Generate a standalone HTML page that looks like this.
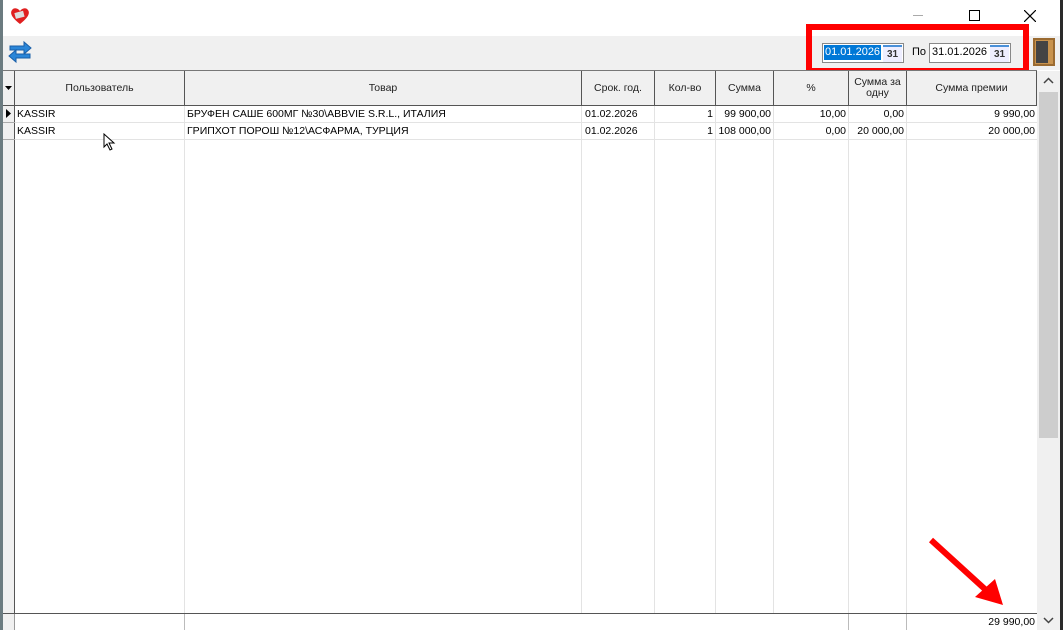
<!DOCTYPE html>
<html><head><meta charset="utf-8"><style>
*{margin:0;padding:0;box-sizing:border-box}
body{width:1063px;height:630px;overflow:hidden;background:#fff;font-family:"Liberation Sans",sans-serif;font-size:11px;color:#000;position:relative}
.a{position:absolute}
.vl{position:absolute;width:1px;background:#e3e3e3}
.hd{position:absolute;top:71px;height:34px;background:#f0f0f0;border-right:1px solid #555;display:flex;align-items:center;justify-content:center;text-align:center;line-height:11px;font-size:10.5px;color:#222}
.c{position:absolute;height:16px;line-height:16px;font-size:10.5px;white-space:nowrap;overflow:hidden}
.r{text-align:right;padding-right:2px}
.hl{position:absolute;left:15px;width:1022px;height:1px;background:#e3e3e3}
</style></head><body>
<div class="a" style="left:0;top:0;width:3px;height:630px;background:#6b7b80"></div>
<div class="a" style="left:1060px;top:0;width:3px;height:630px;background:#2a2a2a"></div>
<svg class="a" style="left:9px;top:6px" width="22" height="20" viewBox="0 0 22 20"><path d="M11 18 C2 11 1 7 3 4 C5 1 9 2 11 5 C13 2 17 1 19 4 C21 7 20 11 11 18Z" fill="#e02020"/><rect x="6" y="6" width="9" height="6" fill="#ddd" transform="rotate(-15 10 9)"/></svg>
<div class="a" style="left:913px;top:15px;width:10px;height:1px;background:#aaa"></div>
<div class="a" style="left:969px;top:10px;width:11px;height:11px;border:1px solid #000"></div>
<svg class="a" style="left:1024px;top:10px" width="12" height="12"><path d="M0 0L12 12M12 0L0 12" stroke="#000" stroke-width="1.2"/></svg>
<div class="a" style="left:3px;top:36px;width:1057px;height:34px;background:#f0f0f0"></div>
<div class="a" style="left:806px;top:36px;width:254px;height:34px;background:#f0f0f0;border-left:1px solid #ddd"></div>
<svg class="a" style="left:6px;top:38px" width="28" height="28" viewBox="0 0 28 28"><path d="M4 12 V8 H18 V4 L25 10 L18 16 V12 Z" fill="#2b86d8" stroke="#1a5fa8"/><path d="M24 16 V20 H10 V24 L3 18 L10 12 V16 Z" fill="#2b86d8" stroke="#1a5fa8"/></svg>
<div class="a" style="left:822px;top:43px;width:82px;height:20px;background:#fff;border:1px solid #888"></div>
<div class="a" style="left:824px;top:45px;background:#0078d7;color:#fff;height:15px;line-height:15px;font-size:11px;padding:0 1px">01.01.2026</div>
<div class="a" style="left:883px;top:45px;width:19px;height:17px;background:#eef;border-top:2px solid #4a90d9;font-size:10px;font-weight:bold;text-align:center;line-height:16px;color:#333">31</div>
<div class="a" style="left:912px;top:46px;font-size:11px">По</div>
<div class="a" style="left:929px;top:43px;width:82px;height:20px;background:#fff;border:1px solid #888"></div>
<div class="a" style="left:932px;top:45px;height:15px;line-height:15px;font-size:11px">31.01.2026</div>
<div class="a" style="left:990px;top:45px;width:19px;height:17px;background:#eef;border-top:2px solid #4a90d9;font-size:10px;font-weight:bold;text-align:center;line-height:16px;color:#333">31</div>
<div class="a" style="left:806px;top:24px;width:223px;height:50px;border:6px solid #f00"></div>
<div class="a" style="left:1033px;top:38px;width:22px;height:28px;background:#c8934e;border:2px solid #9a6a30"></div>
<div class="a" style="left:1036px;top:41px;width:12px;height:22px;background:#444"></div>
<div class="a" style="left:3px;top:70px;width:1034px;height:1px;background:#777"></div>
<div class="a" style="left:3px;top:71px;width:12px;height:542px;background:#f0f0f0;border-right:1px solid #555"></div>
<svg class="a" style="left:5px;top:86px" width="8" height="5"><path d="M0 0H7L3.5 4Z" fill="#000"/></svg>
<div class="hd" style="left:15px;width:170px">Пользователь</div>
<div class="hd" style="left:185px;width:397px">Товар</div>
<div class="hd" style="left:582px;width:73px">Срок. год.</div>
<div class="hd" style="left:655px;width:61px">Кол-во</div>
<div class="hd" style="left:716px;width:58px">Сумма</div>
<div class="hd" style="left:774px;width:75px">%</div>
<div class="hd" style="left:849px;width:58px">Сумма за<br>одну</div>
<div class="hd" style="left:907px;width:130px">Сумма премии</div>
<div class="a" style="left:3px;top:105px;width:1034px;height:1px;background:#555"></div>
<div class="vl" style="left:184px;top:106px;height:507px"></div>
<div class="vl" style="left:581px;top:106px;height:507px"></div>
<div class="vl" style="left:654px;top:106px;height:507px"></div>
<div class="vl" style="left:715px;top:106px;height:507px"></div>
<div class="vl" style="left:773px;top:106px;height:507px"></div>
<div class="vl" style="left:848px;top:106px;height:507px"></div>
<div class="vl" style="left:906px;top:106px;height:507px"></div>
<div class="hl" style="top:122px"></div>
<div class="hl" style="top:139px"></div>
<div class="a" style="left:3px;top:122px;width:12px;height:1px;background:#aaa"></div>
<div class="a" style="left:3px;top:139px;width:12px;height:1px;background:#aaa"></div>
<svg class="a" style="left:6px;top:109px" width="6" height="10"><path d="M0 0V9L5 4.5Z" fill="#000"/></svg>
<div class="c" style="left:17px;top:106px">KASSIR</div>
<div class="c" style="left:187px;top:106px">БРУФЕН САШЕ 600МГ №30\ABBVIE S.R.L., ИТАЛИЯ</div>
<div class="c" style="left:585px;top:106px">01.02.2026</div>
<div class="c r" style="left:655px;top:106px;width:60px">1</div>
<div class="c r" style="left:716px;top:106px;width:57px">99 900,00</div>
<div class="c r" style="left:774px;top:106px;width:74px">10,00</div>
<div class="c r" style="left:849px;top:106px;width:57px">0,00</div>
<div class="c r" style="left:907px;top:106px;width:130px">9 990,00</div>
<div class="c" style="left:17px;top:123px">KASSIR</div>
<div class="c" style="left:187px;top:123px">ГРИПХОТ ПОРОШ №12\АСФАРМА, ТУРЦИЯ</div>
<div class="c" style="left:585px;top:123px">01.02.2026</div>
<div class="c r" style="left:655px;top:123px;width:60px">1</div>
<div class="c r" style="left:716px;top:123px;width:57px">108 000,00</div>
<div class="c r" style="left:774px;top:123px;width:74px">0,00</div>
<div class="c r" style="left:849px;top:123px;width:57px">20 000,00</div>
<div class="c r" style="left:907px;top:123px;width:130px">20 000,00</div>
<svg class="a" style="left:103px;top:133px" width="14" height="18"><path d="M1 1V14L4 11L7 17L9 16L6 10H11Z" fill="#fff" stroke="#000"/></svg>
<div class="a" style="left:3px;top:613px;width:1034px;height:1px;background:#555"></div>
<div class="a" style="left:3px;top:614px;width:12px;height:16px;background:#f0f0f0;border-right:1px solid #999"></div>
<div class="vl" style="left:184px;top:614px;height:16px;background:#bbb"></div>
<div class="vl" style="left:848px;top:614px;height:16px;background:#bbb"></div>
<div class="vl" style="left:906px;top:614px;height:16px;background:#bbb"></div>
<div class="c r" style="left:907px;top:614px;width:130px">29 990,00</div>
<div class="a" style="left:1037px;top:71px;width:23px;height:559px;background:#f0f0f0"></div>
<div class="a" style="left:1039px;top:92px;width:19px;height:346px;background:#cdcdcd"></div>
<svg class="a" style="left:1043px;top:77px" width="11" height="7"><path d="M1 6L5.5 1.5L10 6" stroke="#444" stroke-width="1.5" fill="none"/></svg>
<svg class="a" style="left:1043px;top:617px" width="11" height="7"><path d="M1 1L5.5 5.5L10 1" stroke="#444" stroke-width="1.5" fill="none"/></svg>
<svg class="a" style="left:925px;top:535px" width="80" height="72"><path d="M6 5L62 56" stroke="#f00" stroke-width="6"/><path d="M78 70L50 62L70 44Z" fill="#f00"/></svg>
</body></html>
